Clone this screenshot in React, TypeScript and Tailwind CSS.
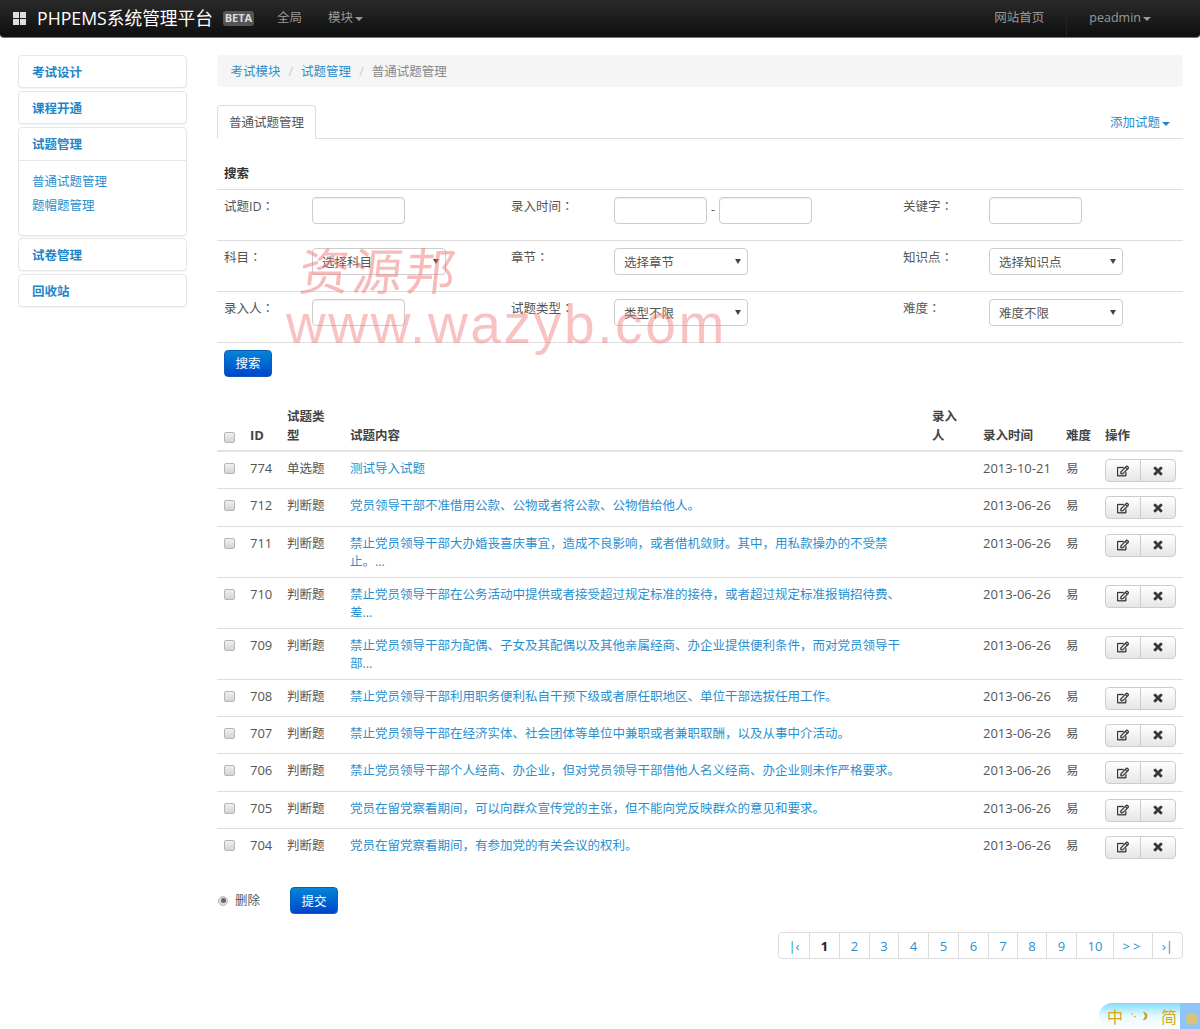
import React from "react";
import { FaRegEdit, FaTimes } from "react-icons/fa";

const rows = [
  ["774", "单选题", "测试导入试题", "2013-10-21"],
  ["712", "判断题", "党员领导干部不准借用公款、公物或者将公款、公物借给他人。", "2013-06-26"],
  ["711", "判断题", "禁止党员领导干部大办婚丧喜庆事宜，造成不良影响，或者借机敛财。其中，用私款操办的不受禁止。...", "2013-06-26"],
  ["710", "判断题", "禁止党员领导干部在公务活动中提供或者接受超过规定标准的接待，或者超过规定标准报销招待费、差...", "2013-06-26"],
  ["709", "判断题", "禁止党员领导干部为配偶、子女及其配偶以及其他亲属经商、办企业提供便利条件，而对党员领导干部...", "2013-06-26"],
  ["708", "判断题", "禁止党员领导干部利用职务便利私自干预下级或者原任职地区、单位干部选拔任用工作。", "2013-06-26"],
  ["707", "判断题", "禁止党员领导干部在经济实体、社会团体等单位中兼职或者兼职取酬，以及从事中介活动。", "2013-06-26"],
  ["706", "判断题", "禁止党员领导干部个人经商、办企业，但对党员领导干部借他人名义经商、办企业则未作严格要求。", "2013-06-26"],
  ["705", "判断题", "党员在留党察看期间，可以向群众宣传党的主张，但不能向党反映群众的意见和要求。", "2013-06-26"],
  ["704", "判断题", "党员在留党察看期间，有参加党的有关会议的权利。", "2013-06-26"],
];

const pages: [string, string][] = [
  ["|‹", "w-[30px]"], ["1", "w-[30px]"], ["2", "w-[30px]"], ["3", "w-[29px]"], ["4", "w-[30px]"], ["5", "w-[30px]"], ["6", "w-[30px]"],
  ["7", "w-[29px]"], ["8", "w-[29px]"], ["9", "w-[30px]"], ["10", "w-[37px]"], [">>", "w-[39px]"], ["›|", "w-[30px]"],
];

function Caret({ color = "border-t-[#999]" }: { color?: string }) {
  return <span className={`inline-block ml-[2px] align-middle w-0 h-0 border-x-[4px] border-x-transparent border-t-[4px] ${color}`} />;
}

function Check({ top = "mt-[4px]" }: { top?: string }) {
  return <span className={`block w-[11px] h-[11px] ${top} rounded-[2px] border border-[#b5b5b5] bg-gradient-to-b from-[#f0f0f0] to-[#d4d4d4]`} />;
}

function Label({ text }: { text: string }) {
  return (
    <span className="block whitespace-nowrap">
      {text}
      <span style={{ fontFamily: '"Noto Sans CJK TC",sans-serif' }}>：</span>
    </span>
  );
}

function TextInput({ w = "w-[93px]" }: { w?: string }) {
  return <span className={`block ${w} h-[27px] rounded-[4px] border border-[#ccc] bg-white shadow-[inset_0_1px_1px_rgba(0,0,0,0.075)]`} />;
}

function SelectBox({ text }: { text: string }) {
  return (
    <span className="flex items-center justify-between w-[134px] h-[27px] rounded-[4px] border border-[#ccc] bg-white pl-[9px] pr-[6px] text-[#555]">
      <span className="pt-[3px]">{text}</span>
      <span className="w-0 h-0 border-x-[3px] border-x-transparent border-t-[5px] border-t-[#444]" />
    </span>
  );
}

function BlueBtn({ children }: { children: React.ReactNode }) {
  return (
    <button className="h-[27px] w-[48px] pt-[2px] rounded-[4px] border border-[#0a5fb8] bg-gradient-to-b from-[#0b84d6] to-[#0044cc] text-white">
      {children}
    </button>
  );
}

function SideCard({ text }: { text: string }) {
  return (
    <div className="h-[33px] pt-[3px] rounded-[4px] border border-[#e6e6e6] bg-white px-[13px] flex items-center font-bold text-[#1f85c9] shadow-[0_1px_1px_rgba(0,0,0,0.05)]">
      {text}
    </div>
  );
}

const searchWidths = ["w-[88px]", "w-[199px]", "w-[103px]", "w-[289px]", "w-[86px]", "w-[201px]"];

function SearchRow({ cells }: { cells: React.ReactNode[] }) {
  return (
    <div className="flex h-[51px] border-b border-[#ddd]">
      {cells.map((c, i) => (
        <div key={i} className={`${searchWidths[i]} pl-[7px] pt-[7px]`}>{c}</div>
      ))}
    </div>
  );
}

const cols = ["w-[26px]", "w-[37px]", "w-[63px]", "w-[582px]", "w-[51px]", "w-[83px]", "w-[39px]", "w-[85px]"];

export default function App() {
  return (
    <div className="relative w-[1200px] h-[1029px] overflow-hidden bg-white text-[12.5px] leading-[18.5px] text-[#555]" style={{ fontFamily: '"Open Sans","Noto Sans CJK SC",sans-serif' }}>
      <header className="h-[38px] flex items-center rounded-b-[4px] border-b border-[#777] bg-gradient-to-b from-[#2a2a2a] to-[#0f0f0f] text-[#999]">
        <span className="ml-[13px] grid grid-cols-2 gap-[1px] w-[13px] h-[13px]">
          <i className="bg-[#dedede]" /><i className="bg-[#dedede]" /><i className="bg-[#dedede]" /><i className="bg-[#dedede]" />
        </span>
        <span className="ml-[11px] text-[17.7px] text-white whitespace-nowrap">PHPEMS系统管理平台</span>
        <span className="ml-[10px] rounded-[3px] bg-[#555] w-[31px] h-[15px] flex items-center justify-center text-[11px] font-bold text-[#ddd]">BETA</span>
        <span className="ml-[23px]">全局</span>
        <span className="ml-[26px]">模块<Caret /></span>
        <span className="ml-auto">网站首页</span>
        <span className="ml-[22px] h-full border-l border-[#222]" />
        <span className="ml-[22px] mr-[49px] whitespace-nowrap">peadmin<Caret /></span>
      </header>

      <div className="flex items-start pt-[17px]">
        <aside className="ml-[18px] w-[169px] flex flex-col gap-[2.75px]">
          <SideCard text="考试设计" />
          <SideCard text="课程开通" />
          <div className="h-[109px] rounded-[4px] border border-[#e6e6e6] shadow-[0_1px_1px_rgba(0,0,0,0.05)]">
            <div className="h-[33px] pt-[3px] border-b border-[#e6e6e6] px-[13px] flex items-center font-bold text-[#1f85c9]">试题管理</div>
            <div className="px-[13px] pt-[12px] text-[#2a8fd0] flex flex-col gap-[6px]">
              <span>普通试题管理</span>
              <span>题帽题管理</span>
            </div>
          </div>
          <SideCard text="试卷管理" />
          <SideCard text="回收站" />
        </aside>

        <main className="ml-[30px] w-[966px]">
          <div className="h-[32px] pt-[2px] rounded-[4px] bg-[#f5f5f5] px-[13.5px] flex items-center gap-[8px] text-[#2a8fd0]">
            <span>考试模块</span><span className="text-[#ccc]">/</span><span>试题管理</span><span className="text-[#ccc]">/</span><span className="text-[#888]">普通试题管理</span>
          </div>

          <div className="mt-[18px] h-[34px] flex justify-between border-b border-[#ddd]">
            <span className="h-[34px] pt-[2px] px-[11px] flex items-center rounded-t-[4px] border border-[#ddd] border-b-white bg-white">普通试题管理</span>
            <span className="text-[#2a8fd0] pt-[9px] pr-[13px]">添加试题<Caret color="border-t-[#1f85c9]" /></span>
          </div>

          <div className="h-[51px] pl-[7px] pt-[26px] border-b border-[#ddd] font-bold text-[#333]">搜索</div>
          <SearchRow cells={[
            <Label text="试题ID" />, <TextInput />, <Label text="录入时间" />,
            <span className="flex items-center gap-[4px]"><TextInput /><span>-</span><TextInput /></span>,
            <Label text="关键字" />, <TextInput />,
          ]} />
          <SearchRow cells={[
            <Label text="科目" />, <SelectBox text="选择科目" />, <Label text="章节" />, <SelectBox text="选择章节" />, <Label text="知识点" />, <SelectBox text="选择知识点" />,
          ]} />
          <SearchRow cells={[
            <Label text="录入人" />, <TextInput />, <Label text="试题类型" />, <SelectBox text="类型不限" />, <Label text="难度" />, <SelectBox text="难度不限" />,
          ]} />

          <div className="pl-[7px] pt-[7px]"><BlueBtn>搜索</BlueBtn></div>

          <div className="mt-[26px] flex items-end h-[49px] pb-[5px] border-b-2 border-[#e2e2e2] font-bold text-[#444]">
            <div className={`${cols[0]} pl-[7px] pb-[2px]`}><Check top="mt-0" /></div>
            <div className={`${cols[1]} pl-[7px] text-[13px] pb-[1px]`}>ID</div>
            <div className={`${cols[2]} px-[7px]`}>试题类型</div>
            <div className={`${cols[3]} px-[7px]`}>试题内容</div>
            <div className={`${cols[4]} px-[7px]`}>录入人</div>
            <div className={`${cols[5]} px-[7px]`}>录入时间</div>
            <div className={`${cols[6]} pl-[7px]`}>难度</div>
            <div className={`${cols[7]} pl-[7px]`}>操作</div>
          </div>

          {rows.map((r, idx) => (
            <div key={r[0]} className={`flex pt-[7px] pb-[6px] ${idx < rows.length - 1 ? "border-b border-[#ddd]" : ""}`}>
              <div className={`${cols[0]} shrink-0 pl-[7px]`}><Check /></div>
              <div className={`${cols[1]} shrink-0 pl-[7px] text-[13px]`}>{r[0]}</div>
              <div className={`${cols[2]} shrink-0 pl-[7px] pt-[1px]`}>{r[1]}</div>
              <div className={`${cols[3]} shrink-0 pl-[7px] pr-[20px] pt-[1px] -mb-[1px] text-[#2a8fd0]`}>{r[2]}</div>
              <div className={`${cols[4]} shrink-0`} />
              <div className={`${cols[5]} shrink-0 pl-[7px] text-[13px]`}>{r[3]}</div>
              <div className={`${cols[6]} shrink-0 pl-[7px] pt-[1px]`}>易</div>
              <div className={`${cols[7]} shrink-0 pl-[7px] h-[23.33px]`}>
                <div className="flex w-[71px] h-[23px] rounded-[4px] border border-[#ccc] bg-gradient-to-b from-white to-[#e6e6e6] text-[#333]">
                  <span className="flex-1 flex items-center justify-center border-r border-[#ccc]"><FaRegEdit className="w-[12px] h-[12px] stroke-[15px]" /></span>
                  <span className="flex-1 flex items-center justify-center"><FaTimes className="w-[12px] h-[12px] stroke-[30px]" /></span>
                </div>
              </div>
            </div>
          ))}

          <div className="mt-[22px] flex items-center h-[27px]">
            <span className="ml-[1px] w-[10px] h-[10px] rounded-full border border-[#bbb] bg-[#ddd] flex items-center justify-center"><i className="block w-[5px] h-[5px] rounded-full bg-[#666]" /></span>
            <span className="ml-[7px] pt-[1px]">删除</span>
            <span className="ml-[30px]"><BlueBtn>提交</BlueBtn></span>
          </div>

          <div className="mt-[18px] flex justify-end">
            <div className="flex h-[27px] rounded-[4px] border border-[#ddd] text-[#2a8fd0] text-[13px]">
              {pages.map(([p, w], i) => (
                <span key={i} className={`flex items-center justify-center ${w} border-l border-[#ddd] first:border-l-0 ${p === "1" ? "font-bold text-[#222]" : ""} ${p === ">>" ? "tracking-[3px]" : ""}`}>{p}</span>
              ))}
            </div>
          </div>
        </main>
      </div>

      <div className="absolute left-[300px] top-[240px] text-[50px] leading-[56px] tracking-[3px] text-[rgba(240,120,120,0.5)] pointer-events-none whitespace-nowrap -skew-x-6" style={{ fontFamily: '"Noto Sans CJK SC",serif' }}>资源邦</div>
      <div className="absolute left-[286px] top-[294px] text-[55px] leading-[60px] tracking-[2.65px] text-[rgba(240,120,120,0.45)] pointer-events-none whitespace-nowrap" style={{ fontFamily: '"Liberation Sans",sans-serif' }}>www.wazyb.com</div>

      <div className="absolute left-[1099px] top-[1003px] w-[101px] h-[26px] rounded-l-[13px] bg-gradient-to-b from-[#7fdcff] via-[#e6f9ff] to-white flex items-center pl-[8px] text-[16px] text-[#d4a814] whitespace-nowrap overflow-hidden" style={{ fontFamily: '"Noto Sans CJK SC",sans-serif' }}>
        <span>中</span>
        <svg viewBox="0 0 32 12" className="ml-[8px] w-[24px] h-[10px]">
          <circle cx="2" cy="3" r="1.2" fill="#c9a21a" />
          <circle cx="6" cy="7" r="1.2" fill="#c9a21a" />
          <path d="M19 0.5 A5.5 5.5 0 0 1 19 11.5 A8 8 0 0 0 22 6 A8 8 0 0 0 19 0.5Z" fill="#c9a21a" stroke="#c9a21a" strokeWidth="1.5" />
        </svg>
        <span className="ml-[9px]">简</span>
        <svg viewBox="0 0 20 26" className="ml-[3px] w-[20px] h-[26px] shrink-0">
          <rect width="20" height="26" fill="#8fc4f7" />
          <circle cx="12" cy="16" r="6" fill="#d9c27a" />
        </svg>
      </div>
    </div>
  );
}
